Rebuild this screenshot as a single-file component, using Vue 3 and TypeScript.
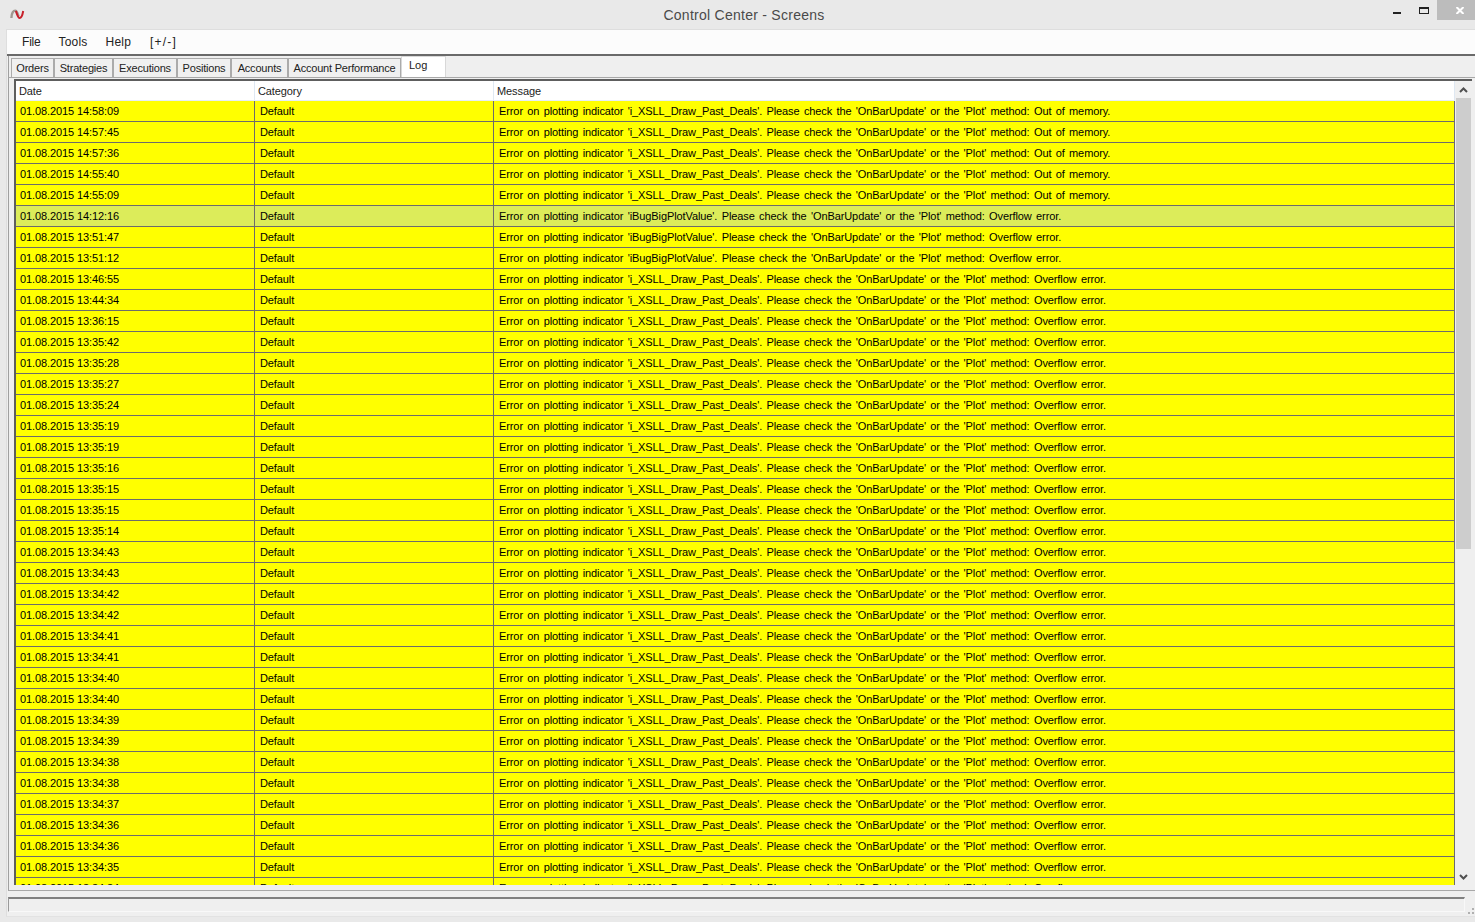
<script setup lang="ts">
interface Row { time: string; kind: 'mem' | 'bug' | 'over'; hi?: boolean }
const tabs = [
  { label: 'Orders', w: 43 },
  { label: 'Strategies', w: 59 },
  { label: 'Executions', w: 64 },
  { label: 'Positions', w: 54 },
  { label: 'Accounts', w: 57 },
  { label: 'Account Performance', w: 113 },
]
const menus = ['File', 'Tools', 'Help', '[+/-]']
const day = '01.08.2015 '
const mem = ['14:58:09', '14:57:45', '14:57:36', '14:55:40', '14:55:09']
const bug = ['14:12:16', '13:51:47', '13:51:12']
const over = ['13:46:55','13:44:34','13:36:15','13:35:42','13:35:28','13:35:27','13:35:24','13:35:19','13:35:19','13:35:16','13:35:15','13:35:15','13:35:14','13:34:43','13:34:43','13:34:42','13:34:42','13:34:41','13:34:41','13:34:40','13:34:40','13:34:39','13:34:39','13:34:38','13:34:38','13:34:37','13:34:36','13:34:36','13:34:35','13:34:34']
const rows: Row[] = [
  ...mem.map((time): Row => ({ time, kind: 'mem' })),
  ...bug.map((time, i): Row => ({ time, kind: 'bug', hi: i === 0 })),
  ...over.map((time): Row => ({ time, kind: 'over' })),
]
const xsll = "Error on plotting indicator 'i_XSLL_Draw_Past_Deals'. Please check the 'OnBarUpdate' or the 'Plot' method: "
const ibug = "Error on plotting indicator 'iBugBigPlotValue'. Please check the 'OnBarUpdate' or the 'Plot' method: Overflow error."
function message(r: Row): string {
  if (r.kind === 'mem') return xsll + 'Out of memory.'
  if (r.kind === 'bug') return ibug
  return xsll + 'Overflow error.'
}
</script>

<template>
  <div class="window">
    <header class="titlebar">
      <svg class="logo" width="16" height="14" viewBox="0 0 16 14">
        <path d="M2.4 11 C2.4 6 4.5 3.6 6.2 3.6 C8 3.6 8.6 6.5 9.6 9.5" fill="none" stroke="#a09890" stroke-width="2.4" />
        <path d="M6.8 4 C8 6.5 8.8 11 10.6 11 C12.6 11 13.6 7.5 14.2 4" fill="none" stroke="#c8202a" stroke-width="2" />
      </svg>
      <div class="title">Control Center - Screens</div>
      <div class="controls">
        <svg class="ctl" width="28" height="20" viewBox="0 0 28 20"><rect x="12" y="12" width="8" height="2" fill="#222" /></svg>
        <svg class="ctl" width="28" height="20" viewBox="0 0 28 20"><rect x="10.5" y="7.5" width="9" height="6" fill="none" stroke="#222" /><rect x="10" y="7" width="10" height="2" fill="#222" /></svg>
        <div class="close">
          <svg width="8" height="7" viewBox="0 0 8 7"><path d="M0.5 0 L7.5 7 M7.5 0 L0.5 7" stroke="#fff" stroke-width="2" /></svg>
        </div>
      </div>
    </header>

    <div class="client">
      <nav class="menubar">
        <span v-for="m in menus" :key="m" class="menu">{{ m }}</span>
      </nav>
      <div class="tabstrip">
        <div v-for="t in tabs" :key="t.label" class="tab" :style="{ width: t.w + 'px' }">{{ t.label }}</div>
        <div class="tab active">Log</div>
      </div>
      <div class="panel">
        <div class="grid">
          <div class="table">
            <div class="head">
              <div class="h c1">Date</div>
              <div class="h c2">Category</div>
              <div class="h c3">Message</div>
            </div>
            <div class="rows">
              <div v-for="(r, i) in rows" :key="i" class="row" :class="{ hi: r.hi }">
                <div class="cell c1">{{ day + r.time }}</div>
                <div class="cell c2">Default</div>
                <div class="cell c3">{{ message(r) }}</div>
              </div>
            </div>
          </div>
          <div class="scroll">
            <svg class="arrow" width="16" height="17" viewBox="0 0 16 17"><path d="M4 11 L7.5 7.5 L11 11" fill="none" stroke="#505050" stroke-width="2" /></svg>
            <div class="track"><div class="thumb"></div></div>
            <svg class="arrow" width="16" height="17" viewBox="0 0 16 17"><path d="M4 7 L7.5 10.5 L11 7" fill="none" stroke="#505050" stroke-width="2" /></svg>
          </div>
        </div>
      </div>
      <footer class="statusrow">
        <div class="status"></div>
        <svg class="grip" width="8" height="8" viewBox="0 0 8 8"><rect x="5" y="1" width="2" height="2" fill="#b0b0b0" /><rect x="1" y="5" width="2" height="2" fill="#b0b0b0" /><rect x="5" y="5" width="2" height="2" fill="#b0b0b0" /></svg>
      </footer>
    </div>
  </div>
</template>

<style scoped>
.window {
  width: 1475px;
  height: 922px;
  box-sizing: border-box;
  padding-bottom: 5px;
  overflow: hidden;
  display: flex;
  flex-direction: column;
  background: #e9e9e9;
  font-family: "Liberation Sans", Arial, sans-serif;
  font-size: 11px;
  color: #000;
}
.titlebar {
  height: 29px;
  flex: none;
  position: relative;
  display: flex;
  align-items: flex-start;
}
.logo { margin: 7px 0 0 9px; }
.title {
  position: absolute;
  left: 13px;
  right: 0;
  top: 7px;
  text-align: center;
  font-size: 14px;
  line-height: 16px;
  color: #4a4a4a;
  letter-spacing: 0.26px;
}
.controls {
  margin-left: auto;
  display: flex;
  align-items: flex-start;
}
.ctl { flex: none; }
.close {
  width: 38px;
  height: 20px;
  box-sizing: border-box;
  padding: 7px 0 0 19px;
  background: #bcbcbc;
  display: flex;
  align-items: flex-start;
}
.client {
  flex: 1;
  min-height: 0;
  margin-left: 6px;
  border-left: 1px solid #dedede;
  border-bottom: 1px solid #e2e2e2;
  background: #efefef;
  display: flex;
  flex-direction: column;
}
.menubar {
  height: 24px;
  flex: none;
  background: #fcfcfc;
  border-top: 1px solid #dedede;
  border-bottom: 2px solid #6a6a6a;
  display: flex;
  align-items: center;
  padding-left: 15px;
  gap: 18px;
  font-size: 12px;
  letter-spacing: 0.2px;
  color: #222;
}
.menu:first-child { letter-spacing: -0.2px; }
.menu:last-child { letter-spacing: 1.2px; margin-left: 1px; }
.tabstrip {
  height: 21px;
  flex: none;
  display: flex;
  align-items: flex-end;
  padding-left: 2px;
  border-left: 1px solid #a0a0a0;
  margin-left: 1px;
}
.tab {
  height: 19px;
  box-sizing: border-box;
  background: #f0f0f0;
  border: 1px solid #ababab;
  border-bottom: none;
  text-align: center;
  line-height: 19px;
  color: #222;
  letter-spacing: -0.2px;
  white-space: nowrap;
}
.tab.active {
  width: 45px;
  height: 21px;
  background: #fff;
  border-color: #d8d8d8;
  text-align: left;
  padding-left: 7px;
  line-height: 17px;
  letter-spacing: 0;
}
.panel {
  flex: 1;
  min-height: 0;
  margin-left: 1px;
  border-left: 1px solid #a0a0a0;
  border-top: 1px solid #a8a8a8;
  border-bottom: 1px solid #a8a8a8;
  padding: 1px 0 5px 5px;
  display: flex;
}
.grid {
  flex: 1;
  min-width: 0;
  display: flex;
  border-left: 2px solid #5e5e5e;
  border-top: 2px solid #5e5e5e;
  background: #fff;
  margin-right: 3px;
}
.table {
  width: 1439px;
  flex: none;
  display: flex;
  flex-direction: column;
  min-height: 0;
  overflow: hidden;
}
.head {
  height: 20px;
  box-sizing: border-box;
  flex: none;
  display: flex;
  background: #fff;
  border-bottom: 1px solid #e6eef6;
}
.h {
  line-height: 21px;
  padding-left: 3px;
  box-sizing: border-box;
  color: #222;
  letter-spacing: -0.1px;
  border-right: 1px solid #dfe8f2;
}
.rows {
  flex: 1;
  min-height: 0;
  overflow: hidden;
}
.row {
  height: 21px;
  box-sizing: border-box;
  display: flex;
  background: #ffff00;
  border-bottom: 1px solid #6c6c6c;
}
.row.hi { background: #dcec5a; }
.c1 { width: 239px; flex: none; }
.c2 { width: 239px; flex: none; }
.c3 { flex: 1; min-width: 0; }
.cell {
  line-height: 20px;
  padding-left: 4px;
  box-sizing: border-box;
  white-space: nowrap;
  border-right: 1px solid #6c6c6c;
  color: #000;
  letter-spacing: -0.1px;
}
.cell.c2 { padding-left: 5px; }
.cell.c3 { word-spacing: 1.4px; padding-left: 5px; }
.scroll {
  width: 17px;
  flex: none;
  padding-left: 1px;
  box-sizing: border-box;
  display: flex;
  flex-direction: column;
  background: #efefef;
}
.arrow { flex: none; }
.track { flex: 1; min-height: 0; }
.thumb { height: 451px; width: 15px; background: #cdcdcd; }
.statusrow {
  height: 25px;
  flex: none;
  display: flex;
  align-items: flex-start;
  padding: 6px 0 0 1px;
  box-sizing: border-box;
}
.status {
  width: 1457px;
  height: 15px;
  box-sizing: border-box;
  border-top: 2px solid #808080;
  border-left: 1px solid #9a9a9a;
  border-right: 1px solid #f8f8f8;
  border-bottom: 1px solid #f8f8f8;
}
.grip { margin: 10px 0 0 2px; flex: none; }
</style>

<style>
html, body { margin: 0; background: #e9e9e9; }
</style>
